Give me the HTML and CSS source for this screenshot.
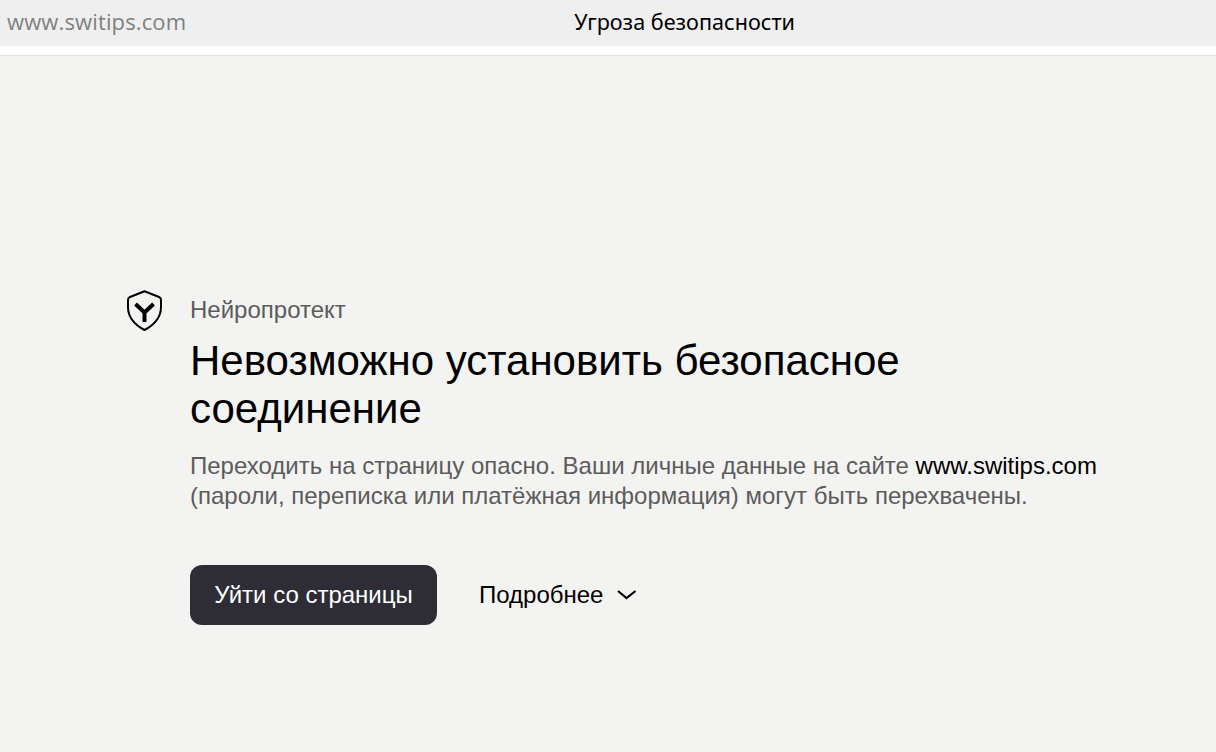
FILE: index.html
```html
<!DOCTYPE html>
<html lang="ru">
<head>
<meta charset="utf-8">
<title>Угроза безопасности</title>
<link rel="stylesheet" href="styles.css">
</head>
<body>
<header class="topbar">
  <span class="domain">www.switips.com</span>
  <span class="page-title">Угроза безопасности</span>
</header>
<div class="gap"></div>
<main class="page">
  <div class="content">
    <div class="icon-col">
      <svg class="shield" width="38" height="42" viewBox="0 0 38 42" fill="none">
        <path d="M18.5 1.2 L33 7 Q35 7.8 35 10 V17 C35 28 28 35 18.5 40 C9 35 2 28 2 17 V10 Q2 7.8 4 7 Z" stroke="#000" stroke-width="2" stroke-linejoin="round"/>
        <path d="M9.5 14 L18.5 22.5 L27.5 14 M18.5 22.5 V32" stroke="#000" stroke-width="4"/>
      </svg>
    </div>
    <div class="text-col">
      <div class="brand">Нейропротект</div>
      <h1 class="headline">Невозможно установить безопасное соединение</h1>
      <p class="desc">Переходить на страницу опасно. Ваши личные данные на сайте <span class="site">www.switips.com</span> (пароли, переписка или платёжная информация) могут быть перехвачены.</p>
      <div class="actions">
        <button class="btn-leave">Уйти со страницы</button>
        <button class="btn-more">Подробнее
          <svg class="chevron" width="20" height="10" viewBox="0 0 20 10" fill="none"><path d="M1 1 L9.5 8 L18.5 1" stroke="#000" stroke-width="2.2"/></svg>
        </button>
      </div>
    </div>
  </div>
</main>
</body>
</html>
```
FILE: styles.css
```css
* { box-sizing: border-box; }
html, body { margin: 0; height: 100%; }
body {
  background: #fff;
  font-family: "Liberation Sans", Arial, sans-serif;
  overflow: hidden;
}
.topbar {
  height: 46px;
  background: #efefef;
  position: relative;
  display: flex;
  align-items: center;
  justify-content: center;
}
.domain {
  position: absolute;
  left: 7px;
  top: 6px;
  font-family: "Open Sans", sans-serif;
  font-size: 22px;
  line-height: 30px;
  letter-spacing: 0.13px;
  color: #808080;
}
.page-title {
  font-family: "Noto Sans", sans-serif;
  font-size: 21.6px;
  line-height: 30px;
  color: #000;
  margin: 0 0 3px 153px;
}
.gap { height: 9px; background: #fff; }
.page {
  height: 697px;
  background: #f3f3f1;
  border-top: 1px solid #e3e3e1;
  padding: 234px 0 0 126px;
}
.content { display: flex; }
.icon-col { width: 64px; flex: none; }
.shield { display: block; }
.text-col { width: 920px; padding-top: 2px; }
.brand {
  font-size: 24px;
  line-height: 36px;
  color: #5c5c5c;
}
.headline {
  margin: 9px 0 0;
  font-size: 42px;
  line-height: 48px;
  font-weight: 400;
  color: #000;
}
.desc {
  margin: 18px 0 0;
  font-size: 24px;
  line-height: 30px;
  color: #5c5c5c;
}
.site { color: #000; }
.actions {
  margin-top: 54px;
  display: flex;
  align-items: center;
  gap: 42px;
}
.btn-leave {
  width: 247px;
  height: 60px;
  border: 0;
  border-radius: 12px;
  background: #2e2d35;
  color: #fff;
  font: 400 24px "Liberation Sans", Arial, sans-serif;
  padding: 0;
}
.btn-more {
  display: flex;
  align-items: center;
  gap: 14px;
  border: 0;
  background: none;
  padding: 0;
  color: #000;
  font: 400 24px "Liberation Sans", Arial, sans-serif;
}
.chevron { display: block; }
```
